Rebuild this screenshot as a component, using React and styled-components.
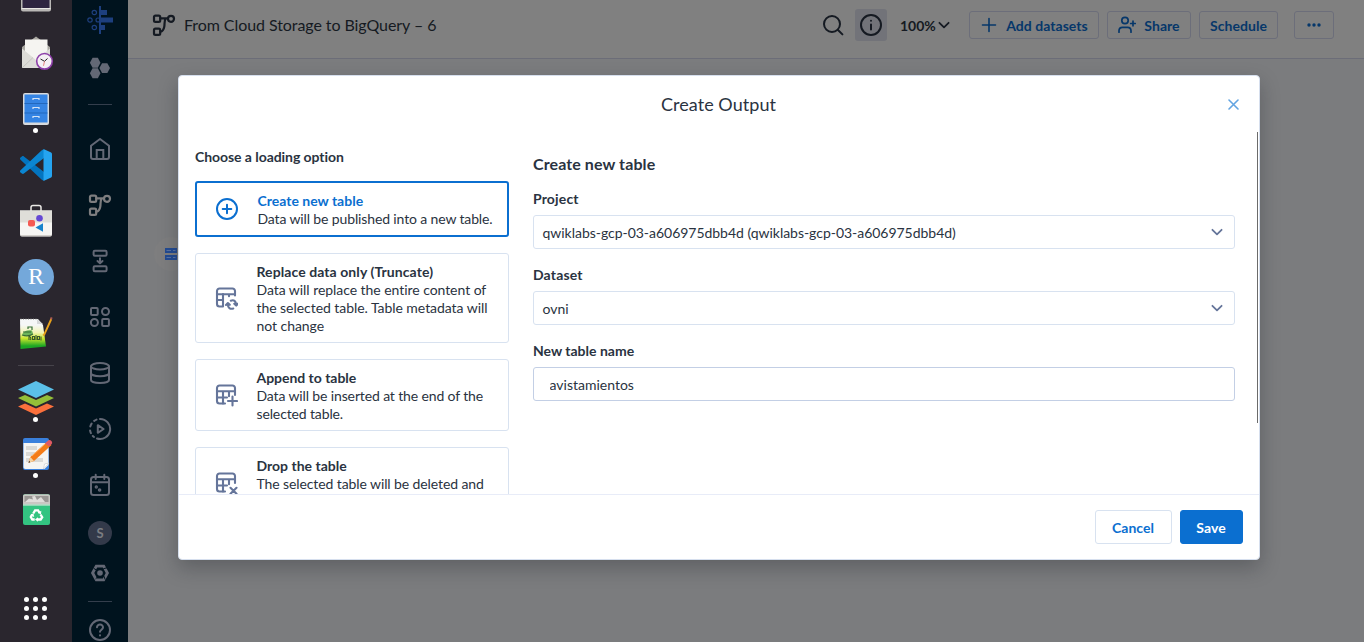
import React from 'react';
import styled, { createGlobalStyle, css } from 'styled-components';

const GlobalStyle = createGlobalStyle`
  * { box-sizing: border-box; }
  html, body { margin: 0; height: 100%; overflow: hidden; }
  body { font-family: Lato, "Liberation Sans", sans-serif; font-size: 14px; line-height: 18px; color: #2a3341; font-variant-ligatures: none; }
  button, input { font: inherit; color: inherit; }
  svg { display: block; flex: none; }
`;

/* ---------- shell ---------- */
const Desktop = styled.div`
  display: flex;
  width: 1364px;
  height: 642px;
  overflow: hidden;
`;
const Dock = styled.aside`
  display: flex;
  flex-direction: column;
  width: 72px;
  flex: none;
  background: #2a262e;
`;
const DockList = styled.div`
  display: flex;
  flex-direction: column;
  align-items: center;
  margin-top: -31px;
`;
const DockItem = styled.div`
  position: relative;
  width: 56px;
  height: 56px;
  flex: none;
  ${(p) => p.$running && css`
    &::after {
      content: '';
      position: absolute;
      left: 25px;
      top: 47px;
      width: 5px;
      height: 5px;
      border-radius: 50%;
      background: #fff;
    }
  `}
`;
const DockDivider = styled.div`
  width: 36px;
  height: 1px;
  margin: 4px 0;
  background: #46434a;
`;
const AppGrid = styled.div`
  display: grid;
  grid-template-columns: repeat(3, 5px);
  gap: 4px;
  margin: auto auto 22px 24px;
`;
const GridDot = styled.i`
  width: 5px;
  height: 5px;
  border-radius: 50%;
  background: #fff;
`;

const AppWindow = styled.div`
  position: relative;
  display: flex;
  flex: 1;
  min-width: 0;
`;
const Rail = styled.nav`
  display: flex;
  flex-direction: column;
  align-items: center;
  width: 56px;
  flex: none;
  background: #00131e;
  color: #636875;
  overflow: hidden;
`;
const RailItem = styled.div`
  display: flex;
  align-items: center;
  justify-content: center;
  height: ${(p) => p.$h || 56}px;
  flex: none;
  color: ${(p) => (p.$active ? '#7d7d7f' : 'inherit')};
`;
const RailDivider = styled.div`
  width: 24px;
  height: 1px;
  flex: none;
  margin: 8px 0 ${(p) => p.$after}px;
  background: #343e4c;
`;
const Avatar = styled.div`
  width: 24px;
  height: 24px;
  border-radius: 50%;
  background: #333a4a;
  color: #7b7d82;
  font-weight: 700;
  font-size: 13px;
  line-height: 25px;
  text-align: center;
`;

/* ---------- flow page ---------- */
const Page = styled.main`
  flex: 1;
  display: flex;
  flex-direction: column;
  min-width: 0;
  background: #7b7c7e;
`;
const Header = styled.header`
  display: flex;
  align-items: center;
  height: 59px;
  flex: none;
  padding: 0 30px 8px 24px;
  background: #808080;
  border-bottom: 1px solid #6c6d78;
  color: #151a22;
`;
const FlowTitle = styled.h1`
  margin: 0 auto 0 8px;
  font-size: 16px;
  font-weight: 400;
  line-height: 20px;
  letter-spacing: -0.07px;
`;
const IconButton = styled.button`
  display: flex;
  align-items: center;
  justify-content: center;
  width: 32px;
  height: 32px;
  padding: 0;
  margin-left: ${(p) => p.$gap || 0}px;
  border: 0;
  border-radius: 3px;
  background: ${(p) => (p.$on ? '#727379' : 'transparent')};
`;
const Zoom = styled.div`
  display: flex;
  align-items: center;
  gap: 2px;
  width: 51px;
  margin: 0 18px 0 13px;
  padding-top: 2px;
  font-weight: 700;
  white-space: nowrap;
  svg { margin-top: -2px; }
`;
const HeaderButton = styled.button`
  display: flex;
  align-items: center;
  justify-content: center;
  gap: 8px;
  width: ${(p) => p.$w}px;
  height: 28px;
  margin-left: ${(p) => p.$gap || 0}px;
  padding: 1px 0 0;
  border: 1px solid #6c6e7a;
  border-radius: 3px;
  background: transparent;
  color: #06376a;
  font-weight: 700;
  letter-spacing: 0.04px;
  white-space: nowrap;
  svg { margin-top: -2px; }
`;
const Canvas = styled.section`
  position: relative;
  flex: 1;
`;
const FlowNode = styled.div`
  position: absolute;
  left: 26px;
  top: 178px;
  display: flex;
  align-items: center;
  justify-content: center;
  width: 34px;
  height: 34px;
  border-radius: 50%;
  background: #7e7e7f;
`;

/* ---------- dialog ---------- */
const Overlay = styled.div`
  position: absolute;
  inset: 0;
  padding: 75px 0 0 106px;
`;
const Dialog = styled.div`
  display: flex;
  flex-direction: column;
  width: 1082px;
  height: 485px;
  background: #fff;
  border: 1px solid #d6dfee;
  border-radius: 4px;
  box-shadow: 0 8px 20px rgba(20, 24, 32, 0.28);
  overflow: hidden;
`;
const DialogHeader = styled.div`
  display: grid;
  grid-template-columns: 1fr auto 1fr;
  align-items: center;
  height: 56px;
  flex: none;
  padding: 0 20px 0 19px;
`;
const DialogTitle = styled.h2`
  grid-column: 2;
  margin: 0;
  font-size: 18px;
  font-weight: 400;
  line-height: 24px;
  letter-spacing: 0.05px;
`;
const CloseButton = styled.button`
  justify-self: end;
  padding: 0;
  border: 0;
  background: none;
`;
const DialogBody = styled.div`
  display: flex;
  flex: 1;
  min-height: 0;
  overflow: hidden;
  padding-left: 16px;
`;
const Options = styled.div`
  display: flex;
  flex-direction: column;
  gap: 16px;
  width: 314px;
  flex: none;
  padding-top: 16px;
`;
const OptionsTitle = styled.h3`
  margin: 0 0 -1px;
  font-size: 14px;
  line-height: 18px;
  letter-spacing: -0.06px;
`;
const OptionCard = styled.div`
  display: flex;
  align-items: center;
  flex: none;
  gap: 18.5px;
  min-height: ${(p) => (p.$selected ? 56 : 72)}px;
  padding: 8px 10px 8px 18px;
  border: ${(p) => (p.$selected ? '2px solid #0b6fd0' : '1px solid #d8e2f0')};
  border-radius: 3px;
  color: ${(p) => (p.$selected ? '#0b6fd0' : '#65759a')};
`;
const OptionText = styled.div`
  align-self: flex-start;
  margin: 1px 0 -1px;
  color: #2a3341;
  letter-spacing: ${(p) => p.$track}px;
`;
const OptionName = styled.div`
  font-weight: 700;
  letter-spacing: ${(p) => p.$track || 0}px;
  color: ${(p) => (p.$selected ? '#0b6fd0' : 'inherit')};
`;
const Form = styled.div`
  flex: 1;
  margin-left: 24px;
  padding-top: 22px;
`;
const FormTitle = styled.h3`
  margin: 0 0 16px;
  font-size: 16px;
  line-height: 20px;
  letter-spacing: 0.1px;
`;
const Field = styled.label`
  display: block;
  margin-bottom: 17px;
`;
const FieldLabel = styled.span`
  display: block;
  margin-bottom: 7px;
  font-weight: 700;
  letter-spacing: ${(p) => p.$track || 0}px;
`;
const Select = styled.div`
  display: flex;
  align-items: center;
  justify-content: space-between;
  height: 34px;
  padding: 1px 11px 0 8.5px;
  border: 1px solid #d8e2f0;
  border-radius: 3px;
  letter-spacing: -0.03px;
  svg { margin-top: -1px; }
`;
const TextInput = styled.input`
  display: block;
  width: 100%;
  height: 34px;
  padding: 1px 15.5px 0;
  border: 1px solid #c3cfe5;
  border-radius: 3px;
  outline: 0;
  background: #fff;
`;
const ScrollTrack = styled.div`
  width: 1px;
  margin: 0 1px 0 22px;
`;
const ScrollThumb = styled.div`
  height: 291px;
  background: #6b6b6b;
`;
const DialogFooter = styled.div`
  display: flex;
  justify-content: flex-end;
  gap: 8px;
  height: 65px;
  flex: none;
  padding: 15px 16px;
  border-top: 1px solid #e8ecf8;
`;
const FooterButton = styled.button`
  width: ${(p) => p.$w}px;
  height: 34px;
  padding: 1px 1px 0 0;
  border: 1px solid ${(p) => (p.$primary ? '#0b6fd0' : '#d8e2f0')};
  border-radius: 3px;
  background: ${(p) => (p.$primary ? '#0b6fd0' : '#fff')};
  color: ${(p) => (p.$primary ? '#fff' : '#0b6fd0')};
  font-weight: 700;
  letter-spacing: 0.05px;
`;

/* ---------- icons ---------- */
const Line = ({ size = 24, box = 24, w = 2, children }) => (
  <svg width={size} height={size} viewBox={`0 0 ${box} ${box}`} fill="none" stroke="currentColor" strokeWidth={w} strokeLinecap="round" strokeLinejoin="round">
    {children}
  </svg>
);

const FlowIcon = () => (
  <Line w={2.2}>
    <rect x="2" y="2.6" width="6.2" height="6.2" rx="1.4" />
    <rect x="2" y="15.600" width="6.2" height="6.2" rx="1.4" />
    <circle cx="19" cy="5.8" r="3" />
    <path d="M8.4 5.3h7.4M13.6 5.6c-1.600 2.500-.7 5.500-1.400 8.500-.5 2.500-1.500 4.200-3.800 4.600" />
  </Line>
);
const ChevronIcon = ({ color = 'currentColor' }) => (
  <svg width="12" height="12" viewBox="0 0 12 12" fill="none" stroke={color} strokeWidth="1.800" strokeLinecap="round" strokeLinejoin="round">
    <path d="M1.400 3.800 6 8.300l4.600-4.500" />
  </svg>
);
const hex = (cx, cy, r) =>
  [[-1, 0], [-0.5, -0.93], [0.5, -0.93], [1, 0], [0.5, 0.93], [-0.5, 0.93]].map(([a, b]) => `${cx + a * r},${cy + b * r}`).join(' ');

const LogoIcon = () => (
  <svg width="28" height="30" viewBox="0 0 28 30" fill="#1d3f7e">
    <path d="M13 1h2v28h-2zM15 5h6v5h-6zM15 12.500h12v5H15zM15 20h4v5h-4z" />
    <g fill="none" stroke="#1d3f7e" strokeWidth="1.200">
      <circle cx="8.300" cy="7.500" r="2.200" /><circle cx="4" cy="15" r="2.200" /><circle cx="12" cy="15" r="2" /><circle cx="8.300" cy="22.500" r="2.200" />
    </g>
  </svg>
);
const HexesIcon = () => (
  <svg width="24" height="24" viewBox="0 0 24 24" fill="currentColor">
    <polygon points={hex(7.2, 6.8, 5.3)} /><polygon points={hex(7.2, 17.3, 5.3)} /><polygon points={hex(16.7, 12.1, 5.3)} />
  </svg>
);
const HomeIcon = () => (
  <Line><path d="M3 8.800 12 2l9 6.800V20a2 2 0 0 1-2 2H5a2 2 0 0 1-2-2z" /><path d="M8.700 22v-9h6.600v9" strokeLinejoin="miter" /></Line>
);
const MergeIcon = () => (
  <Line>
    <rect x="5.600" y="1.800" width="13" height="5" rx="1.200" /><rect x="5.600" y="17.200" width="13" height="5" rx="1.200" />
    <path d="M12 9.300v5M9.500 12l2.500 2.400L14.500 12" />
  </Line>
);
const ShapesIcon = () => (
  <Line>
    <rect x="3" y="3" width="6.700" height="7" rx="1" /><circle cx="17.500" cy="6.500" r="3.500" />
    <circle cx="6.400" cy="17.500" r="3.500" /><rect x="14.200" y="14" width="6.700" height="7" rx="1" />
  </Line>
);
const DatabaseIcon = () => (
  <Line>
    <ellipse cx="12" cy="5.200" rx="9" ry="3.200" />
    <path d="M3 5.200V19c0 1.800 4 3 9 3s9-1.200 9-3V5.200M3 12c0 1.800 4 3.200 9 3.200s9-1.400 9-3.200" />
  </Line>
);
const RunsIcon = () => (
  <Line>
    <path d="M12 2a10 10 0 1 1-3 19.500M6.200 3.900A10 10 0 0 1 8.500 2.600M2.300 9.500A10 10 0 0 1 3.600 6.600M2.100 13.500a10 10 0 0 0 .8 2.600M4.800 19a10 10 0 0 0 1.200 1" />
    <path d="M9.800 8.200v7.600L15.600 12z" />
  </Line>
);
const CalendarIcon = () => (
  <Line>
    <rect x="3" y="4" width="18" height="18" rx="2.500" /><path d="M3 9.200h18M7.700 1.800V6M16.300 1.800V6" />
    <circle cx="8.300" cy="14" r=".7" /><circle cx="11.600" cy="17" r=".8" />
  </Line>
);
const SettingsIcon = () => (
  <svg width="20" height="20" viewBox="0 0 20 20" fill="none" stroke="currentColor">
    <polygon points={hex(10, 10, 7.4)} strokeWidth="2.900" />
    <path d="M3.700 5.400 6.500 7M13.300 5.800l4-1.200M13.600 12.400l1.600 4.200M5.600 15.800l2.200-2" stroke="#00131e" strokeWidth="1" />
    <circle cx="10" cy="10" r="2.800" fill="currentColor" stroke="none" />
  </svg>
);
const HelpIcon = () => (
  <Line><circle cx="12" cy="12" r="10" /><path d="M9 9.300a3 3 0 0 1 6 .2c0 2-3 2.400-3 4.300M12 17.300v.1" /></Line>
);
const TableIcon = ({ children, replace }) => (
  <Line w={2.1}>
    <path d={replace ? 'M21 9.500V5a2.500 2.500 0 0 0-2.500-2.500h-13A2.500 2.500 0 0 0 3 5v13a2.500 2.500 0 0 0 2.500 2.500H9V8' : 'M21 12V5a2.500 2.500 0 0 0-2.500-2.500h-13A2.500 2.500 0 0 0 3 5v13a2.500 2.500 0 0 0 2.500 2.500h5.500'} />
    <path d={replace ? 'M3 8.300h18M3 14h6M15 8.300v2' : 'M3 8.300h18M3 14.500h10M9 8.300v12.200M15 8.300v5'} />
    {children}
  </Line>
);

const DockArt = ({ children }) => (
  <svg width="56" height="56" viewBox="0 0 56 56">{children}</svg>
);
const TerminalArt = () => (
  <DockArt>
    <rect x="13" y="14" width="30" height="28.500" rx="2" fill="#b9b7b5" />
    <rect x="14.500" y="15" width="27" height="24" fill="#2e2440" />
    <path d="M13.500 39.500h29" stroke="#e8e6e4" />
  </DockArt>
);
const MailArt = () => (
  <DockArt>
    <path d="M14 22 28 11.500 42 22v21H14z" fill="#a9a7a1" />
    <path d="M17 14.500h22.500V37H17z" fill="#f5f4f1" />
    <path d="M14 23.500 28 35l14-11.500V43H14z" fill="#dddcd8" />
    <path d="m14 43 11-10.500M42 43 31 32.500" stroke="#c6c5c0" />
    <circle cx="36.500" cy="36.300" r="7.800" fill="#f5f0f4" stroke="#8d3fa9" strokeWidth="1.600" />
    <path d="m32.500 34 4 2.300 3-2.800" fill="none" stroke="#222" />
    <path d="m36.500 36.300-1 4.500" stroke="#e2574c" strokeWidth=".7" />
  </DockArt>
);
const FilesArt = () => (
  <DockArt>
    <rect x="15" y="12" width="26" height="32" rx="2" fill="#d8dadd" />
    <rect x="16.500" y="13.500" width="23" height="28" fill="#3584e4" />
    <path d="M16.500 22.500h23M16.500 32h23" stroke="#2368bd" />
    <path d="M25 19v-1.500h6V19M25 28v-1.500h6V28M25 37v-1.500h6V37" stroke="#d4e3f6" strokeWidth="1.200" fill="none" />
  </DockArt>
);
const CodeArt = () => (
  <DockArt>
    <path d="M12.500 22.700c-.8-.8-.6-1.600 0-2.100l1.400-1.200c.7-.5 1.400-.5 2 0L36 35v8.500c-1 0-1.800-.4-2.500-1z" fill="#0374bf" />
    <path d="M12.500 33.300c-.8.800-.6 1.600 0 2.100l1.400 1.200c.7.500 1.400.5 2 0L36 21v-8.500c-1 0-1.800.4-2.500 1z" fill="#0b86d2" />
    <path d="m35.500 12 7.100 3.200c.8.400 1.400 1.100 1.400 2v21.600c0 .9-.6 1.600-1.400 2L35.500 44z" fill="#25a4f0" />
  </DockArt>
);
const StoreArt = () => (
  <DockArt>
    <path d="M23 18v-3.500c0-1.500.8-2 2-2h6c1.200 0 2 .5 2 2V18" fill="none" stroke="#ebe9e6" strokeWidth="1.500" />
    <path d="M12 17.500h32V41c0 1.500-.7 2.500-2 2.500H14c-1.300 0-2-1-2-2.500z" fill="#f6f5f3" />
    <path d="M12 17.500h32v12H12z" fill="#dfded9" />
    <path d="M12.500 42.700h31" stroke="#c9c6c1" />
    <circle cx="31.500" cy="25.300" r="3.300" fill="#6548d4" />
    <rect x="20" y="27" width="7" height="6.500" rx="2" fill="#f45a54" />
    <path d="m27.500 34.500 7.500-4.300v8.600z" fill="#1783cc" />
  </DockArt>
);
const RLetter = styled.div`
  display: flex;
  align-items: center;
  justify-content: center;
  width: 36px;
  height: 36px;
  margin: 10px;
  padding-bottom: 2px;
  border-radius: 50%;
  background: #74a8da;
  color: #fff;
  font: 24px/34px "Liberation Serif", serif;
`;
const NotepadArt = () => (
  <DockArt>
    <defs>
      <linearGradient id="sheet" x1="0" y1="0" x2="0" y2="1">
        <stop offset=".2" stopColor="#f6f7f7" /><stop offset=".45" stopColor="#f2f5b5" /><stop offset=".65" stopColor="#c6e52c" /><stop offset=".9" stopColor="#1ba624" />
      </linearGradient>
    </defs>
    <path d="M12 14h18l5 6 3 21.500L12.500 44z" fill="url(#sheet)" />
    <path d="M12.500 14h17" stroke="#777" strokeWidth="1.200" strokeDasharray="1 1.500" />
    <path d="M29 14v5h6z" fill="#d7d9d9" />
    <path d="M14 29.500c2-4 6-5 10-4l1 3c-2 3-8 3-10.500 1z" fill="#6db55c" />
    <path d="M15 27h8M14 30c3 1 8 1 11-1M20 24v-2h4v3" fill="none" stroke="#366f36" strokeWidth="1.200" />
    <path d="M21 35v-5M21 32c2-1 2 2 1.500 3M24.500 31.500h2v3h-2zM28 30v5M29.500 31.500h2v3h-2zM33 31.500v4" fill="none" stroke="#3b5b2c" strokeWidth="1.100" />
    <path d="m43.300 14-7 15.500-1.200 1" stroke="#e9a21b" strokeWidth="1.900" fill="none" />
    <path d="m43.700 12.300-.8 2" stroke="#a85b54" strokeWidth="2" />
  </DockArt>
);
const LayersArt = () => (
  <DockArt>
    <path d="m10 36.500 7-3 11 5 11-5 7 3-18 8.500z" fill="#fb703c" />
    <path d="m10 28 7-3 11 5 11-5 7 3-18 8.500z" fill="#94bf38" />
    <path d="m28 11 18 8.500L28 28l-18-8.500z" fill="#5bc0e8" />
  </DockArt>
);
const EditorArt = () => (
  <DockArt>
    <rect x="15" y="12" width="26" height="32" rx="2" fill="#3a80dc" />
    <path d="M15.500 17h25v22l-4 4h-19c-1.300 0-2-.7-2-2z" fill="#f5f4f2" />
    <path d="M18 20h11v4H18zM18 26h14v4H18zM18 32h17v4H18z" fill="#dad9d6" />
    <path d="m41 37-5.500 6 1-5z" fill="#fff" stroke="#c5c6c9" strokeWidth=".6" />
    <path d="M39.500 15.500 43.500 19 26 35l-5.500 1.800L22.300 31z" fill="#f47b18" />
    <path d="M38.300 16.700 24 30" stroke="#ffaf62" />
    <path d="m22.300 31 3.700 4-5.500 1.800z" fill="#f6d2a1" />
    <path d="m21.200 34.800 1 1.500-1.700.5z" fill="#222" />
    <path d="m37 17.400 3.200-3c1-.8 2.300-.5 3.200.5s1 2.300.2 3.200l-2.400 2.500z" fill="#df5965" />
  </DockArt>
);
const TrashArt = () => (
  <DockArt>
    <rect x="15" y="12.300" width="27" height="30.700" rx="2" fill="#33c481" />
    <path d="M15 22.500V14.300c0-1.300.7-2 2-2h23c1.300 0 2 .7 2 2v8.200z" fill="#c9c7c3" />
    <path d="M16.500 14h24v6h-24z" fill="#999693" />
    <path d="m17 20 4-3.500 4 1-1-3 3-.5 2 4 4-3 4 5z" fill="#e0dedb" />
    <path d="M15 23h27" stroke="#eceae7" />
    <g fill="none" stroke="#fff" strokeWidth="2.300">
      <path d="m25.200 31.500 1.900-3.200h3l1.500 2.700" /><path d="m32.500 32.500 1.700 2.700-1.500 2.300h-3.500" /><path d="M26.700 37.500h-2.400L22.800 35l1.500-2.700" />
    </g>
    <path d="m33.300 28.800-.3 3.700-3.200-1.700zM30 35.200v4.500l-3-2.200zM22.200 33.200l3.200-2 .8 3.700z" fill="#fff" />
  </DockArt>
);

const dockTop = [
  { art: <TerminalArt /> }, { art: <MailArt /> }, { art: <FilesArt />, running: true }, { art: <CodeArt /> },
  { art: <StoreArt /> }, { art: <RLetter>R</RLetter> }, { art: <NotepadArt /> },
];
const dockBottom = [{ art: <LayersArt />, running: true }, { art: <EditorArt />, running: true }, { art: <TrashArt /> }];

const options = [
  {
    name: 'Create new table', text: 'Data will be published into a new table.', selected: true, track: -0.13,
    icon: <Line><circle cx="12" cy="12" r="10" /><path d="M12 7.700v8.600M7.700 12h8.600" /></Line>,
  },
  {
    name: 'Replace data only (Truncate)', nameTrack: 0.08, track: -0.05,
    text: 'Data will replace the entire content of the selected table. Table metadata will not change',
    icon: (
      <TableIcon replace>
        <path d="M16.800 14.700c3-1.300 5.300.3 5.300 4.300M20.300 17.800l1.900 1.800 1.700-1.900M19.300 22.500c-3 1-5.600-.6-5.400-4.500M12 19l1.900-1.900 1.900 1.700" />
      </TableIcon>
    ),
  },
  {
    name: 'Append to table', text: 'Data will be inserted at the end of the selected table.', nameTrack: -0.03, track: -0.13,
    icon: <TableIcon><path d="M18.500 13.500v9M14 18h9" /></TableIcon>,
  },
  {
    name: 'Drop the table', text: 'The selected table will be deleted and', track: -0.1,
    icon: <TableIcon><path d="m16.500 16.800 6 6M22.500 16.800l-6 6" /></TableIcon>,
  },
];

const DockEntry = ({ item }) => <DockItem $running={item.running}>{item.art}</DockItem>;

export default function App() {
  return (
    <Desktop>
      <GlobalStyle />
      <Dock>
        <DockList>
          {dockTop.map((item, i) => <DockEntry key={i} item={item} />)}
          <DockDivider />
          {dockBottom.map((item, i) => <DockEntry key={i} item={item} />)}
        </DockList>
        <AppGrid>{Array.from({ length: 9 }, (_, i) => <GridDot key={i} />)}</AppGrid>
      </Dock>
      <AppWindow>
        <Rail>
          <RailItem $h={40}><LogoIcon /></RailItem>
          <RailItem><HexesIcon /></RailItem>
          <RailDivider $after={16} />
          <RailItem><HomeIcon /></RailItem>
          <RailItem $active><FlowIcon /></RailItem>
          <RailItem><MergeIcon /></RailItem>
          <RailItem><ShapesIcon /></RailItem>
          <RailItem><DatabaseIcon /></RailItem>
          <RailItem><RunsIcon /></RailItem>
          <RailItem><CalendarIcon /></RailItem>
          <RailItem $h={40}><Avatar>S</Avatar></RailItem>
          <RailItem $h={40}><SettingsIcon /></RailItem>
          <RailDivider $after={0} />
          <RailItem><HelpIcon /></RailItem>
        </Rail>
        <Page>
          <Header>
            <FlowIcon />
            <FlowTitle>From Cloud Storage to BigQuery – 6</FlowTitle>
            <IconButton><Line><circle cx="11" cy="11" r="8" /><path d="m17 17 4.400 4.400" /></Line></IconButton>
            <IconButton $on $gap={6}><Line><circle cx="12" cy="12" r="10" /><path d="M12 11.500v5M12 7.700v.1" /></Line></IconButton>
            <Zoom>100%<ChevronIcon /></Zoom>
            <HeaderButton $w={130}><Line size={18} box={18} w={1.6}><path d="M9 2.500v13M2.500 9h13" /></Line>Add datasets</HeaderButton>
            <HeaderButton $w={84} $gap={8}>
              <Line size={18} box={18} w={1.7}>
                <circle cx="7" cy="4.500" r="3.200" /><path d="M1 16.200v-1.500c0-2.200 1.500-3.400 3.500-3.400h5c2 0 3.500 1.200 3.500 3.400v1.500M15 5.200v4.600M12.700 7.500h4.600" />
              </Line>
              Share
            </HeaderButton>
            <HeaderButton $w={79} $gap={8}>Schedule</HeaderButton>
            <HeaderButton $w={40} $gap={16}>
              <svg width="14" height="4" viewBox="0 0 14 4" fill="currentColor"><circle cx="2" cy="2" r="1.700" /><circle cx="7" cy="2" r="1.700" /><circle cx="12" cy="2" r="1.700" /></svg>
            </HeaderButton>
          </Header>
          <Canvas>
            <FlowNode>
              <svg width="12" height="12" viewBox="0 0 12 12" fill="#234b93">
                <path d="M0 0h12v5H0zM0 7h12v5H0z" /><path d="M1.500 2.500H6M8 2.500h2.500M1.500 9.500H6M8 9.500h2.500" stroke="#6078a6" strokeWidth=".9" />
              </svg>
            </FlowNode>
          </Canvas>
        </Page>
        <Overlay>
          <Dialog role="dialog">
            <DialogHeader>
              <DialogTitle>Create Output</DialogTitle>
              <CloseButton aria-label="Close">
                <svg width="11" height="11" viewBox="0 0 11 11" stroke="#62a4e2" strokeWidth="1.600" strokeLinecap="round"><path d="m1 1 9 9M10 1l-9 9" /></svg>
              </CloseButton>
            </DialogHeader>
            <DialogBody>
              <Options>
                <OptionsTitle>Choose a loading option</OptionsTitle>
                {options.map((o) => (
                  <OptionCard key={o.name} $selected={o.selected}>
                    {o.icon}
                    <OptionText $track={o.track}>
                      <OptionName $selected={o.selected} $track={o.nameTrack}>{o.name}</OptionName>
                      {o.text}
                    </OptionText>
                  </OptionCard>
                ))}
              </Options>
              <Form>
                <FormTitle>Create new table</FormTitle>
                <Field>
                  <FieldLabel $track={0.15}>Project</FieldLabel>
                  <Select>qwiklabs-gcp-03-a606975dbb4d (qwiklabs-gcp-03-a606975dbb4d)<ChevronIcon color="#65759a" /></Select>
                </Field>
                <Field>
                  <FieldLabel $track={0.15}>Dataset</FieldLabel>
                  <Select>ovni<ChevronIcon color="#65759a" /></Select>
                </Field>
                <Field>
                  <FieldLabel>New table name</FieldLabel>
                  <TextInput defaultValue="avistamientos" />
                </Field>
              </Form>
              <ScrollTrack><ScrollThumb /></ScrollTrack>
            </DialogBody>
            <DialogFooter>
              <FooterButton $w={77}>Cancel</FooterButton>
              <FooterButton $w={63} $primary>Save</FooterButton>
            </DialogFooter>
          </Dialog>
        </Overlay>
      </AppWindow>
    </Desktop>
  );
}
